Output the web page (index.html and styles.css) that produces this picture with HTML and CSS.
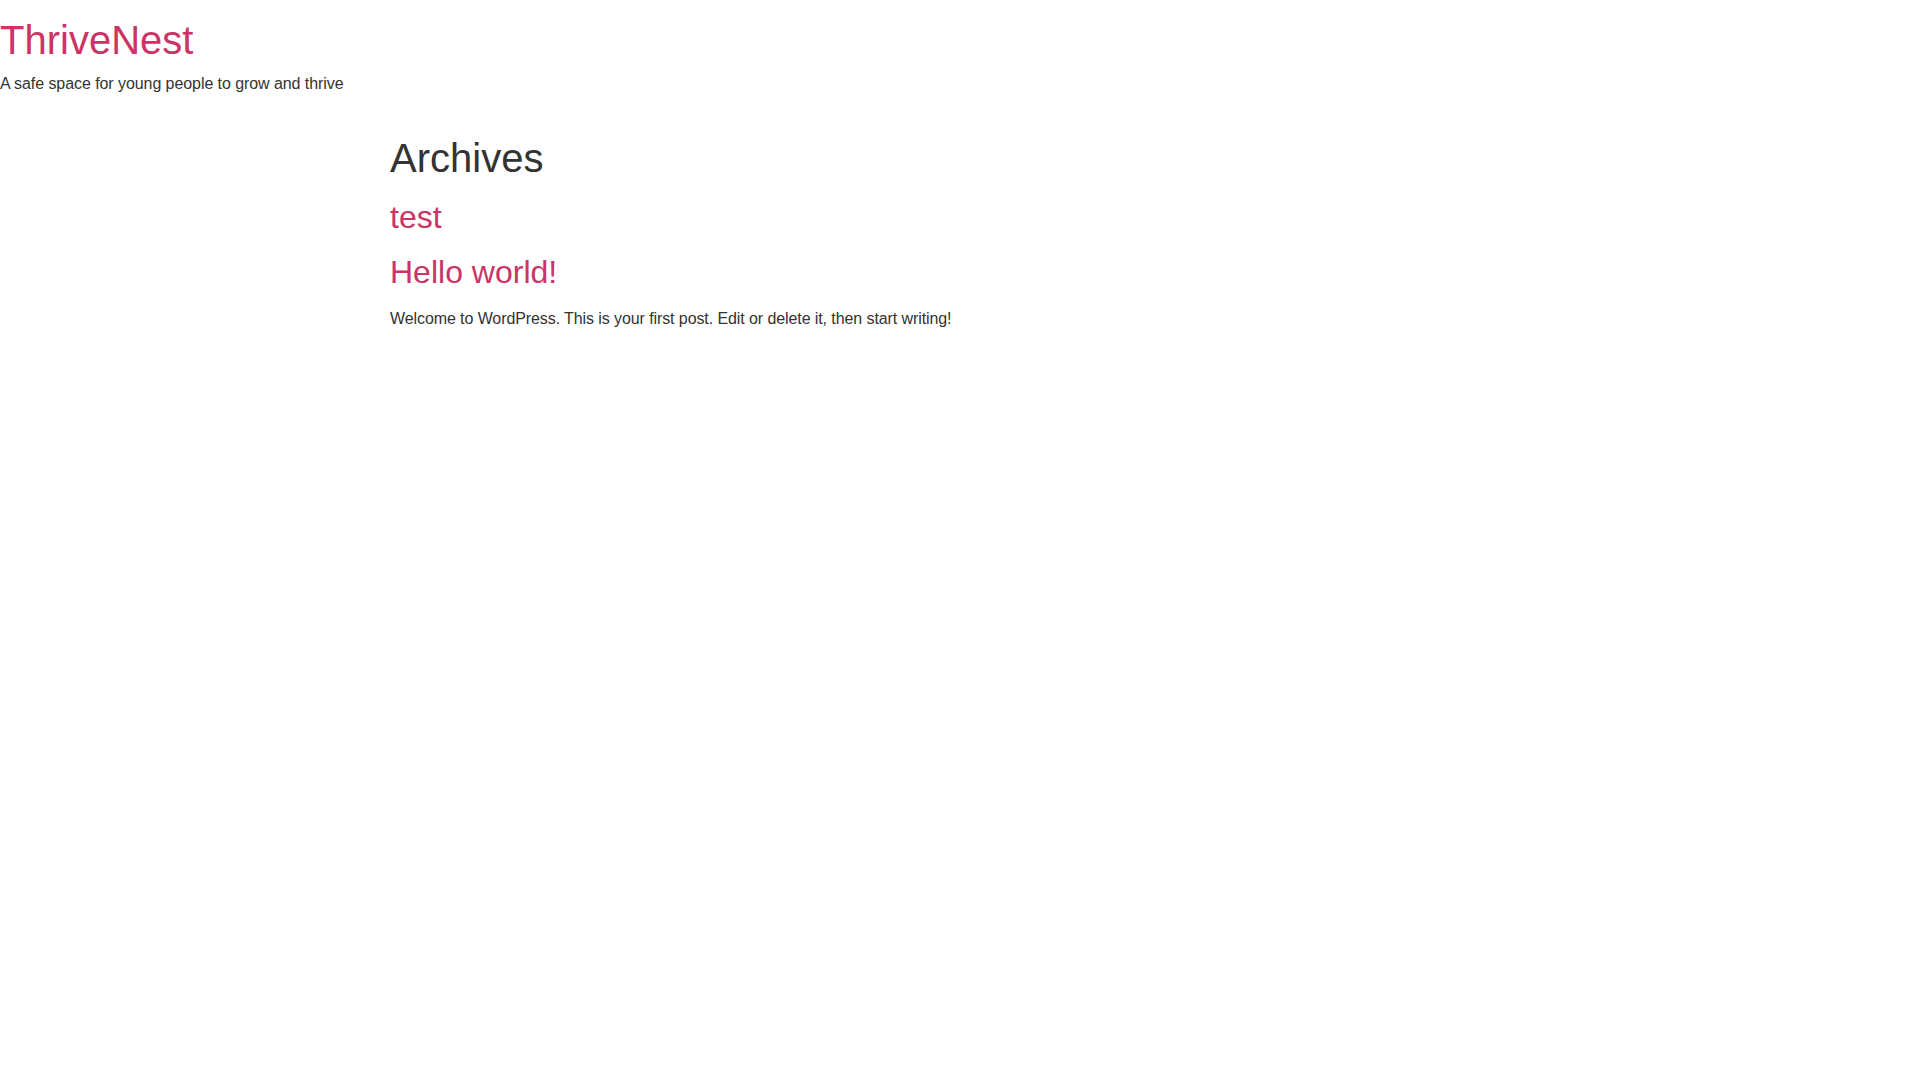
FILE: index.html
```html
<!DOCTYPE html>
<html lang="en">
<head>
<meta charset="utf-8">
<title>Archives - ThriveNest</title>
<link rel="stylesheet" href="styles.css">
</head>
<body>
<header class="site-header">
  <h1 class="site-title"><a href="#">ThriveNest</a></h1>
  <p class="site-description">A safe space for young people to grow and thrive</p>
</header>
<main class="site-main">
  <div class="page-header">
    <h1 class="entry-title">Archives</h1>
  </div>
  <div class="page-content">
    <article class="post post-test">
      <h2 class="post-title"><a href="#">test</a></h2>
    </article>
    <article class="post post-hello">
      <h2 class="post-title"><a href="#">Hello world!</a></h2>
      <p class="post-excerpt">Welcome to WordPress. This is your first post. Edit or delete it, then start writing!</p>
    </article>
  </div>
</main>
</body>
</html>
```
FILE: styles.css
```css
html, body {
  margin: 0;
  padding: 0;
  background: #fff;
}
body {
  font-family: "Liberation Sans", Arial, sans-serif;
  font-size: 16px;
  line-height: 1.5;
  color: #333;
}
a {
  color: #c36;
  text-decoration: none;
}
h1, h2 {
  font-weight: 500;
  line-height: 1.2;
  color: inherit;
  letter-spacing: 0;
}
.site-header {
  padding-top: 16px;
}
.site-title {
  font-size: 40px;
  margin: 0 0 8px;
}
.site-description {
  margin: 0;
  letter-spacing: -0.07px;
}
.site-main {
  max-width: 1140px;
  margin: 0 auto;
  padding-top: 38px;
}
.entry-title {
  font-size: 40px;
  margin: 0 0 16px;
}
.post-title {
  font-size: 32px;
  margin: 0;
}
.post-test {
  margin-bottom: 17px;
}
.post-hello .post-title {
  margin-bottom: 15px;
}
.post-excerpt {
  margin: 0;
  letter-spacing: -0.09px;
}
```
